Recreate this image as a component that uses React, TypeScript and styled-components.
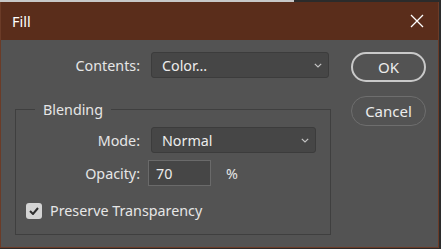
import React from "react";
import styled, { createGlobalStyle } from "styled-components";

const Global = createGlobalStyle`
  html, body { margin: 0; padding: 0; background: #2b2b2b; }
  body { font-family: "Noto Sans", "Open Sans", sans-serif; }
  * { box-sizing: border-box; }
`;

const Page = styled.div`
  width: 441px;
  height: 249px;
  display: flex;
  flex-direction: column;
  background: #2b2b2b;
  overflow: hidden;
`;

const TopStrip = styled.div`
  height: 2px;
  display: flex;
`;

const StripLight = styled.div`
  width: 294px;
  background: #c8c8c8;
`;

const Window = styled.div`
  width: 439px;
  height: 246px;
  display: flex;
  flex-direction: column;
  border: 1px solid #6b3b27;
  border-top: none;
`;

const TitleBar = styled.div`
  height: 38px;
  background: #5a2d1b;
  display: flex;
  align-items: center;
  justify-content: space-between;
  padding: 0 12px 0 11px;
  color: #ffffff;
  font-size: 14.5px;
`;

const CloseButton = styled.div`
  width: 14px;
  height: 14px;
  display: flex;
  align-items: center;
  justify-content: center;
  margin-right: 2px;
`;

const Body = styled.div`
  flex: 1;
  background: #535353;
  display: flex;
  padding: 12px 0 0 14px;
  color: #e6e6e6;
  font-size: 14.3px;
`;

const LeftColumn = styled.div`
  display: flex;
  flex-direction: column;
`;

const Row = styled.div<{ $mb?: number }>`
  display: flex;
  align-items: center;
  margin-bottom: ${(p) => p.$mb ?? 0}px;
`;

const Label = styled.div<{ $w: number; $gap: number }>`
  width: ${(p) => p.$w}px;
  margin-right: ${(p) => p.$gap}px;
  text-align: right;
  white-space: nowrap;
`;

const Select = styled.div<{ $w: number }>`
  width: ${(p) => p.$w}px;
  height: 26px;
  background: #464646;
  border: 1px solid #3c3c3c;
  border-radius: 3px;
  display: flex;
  align-items: center;
  justify-content: space-between;
  padding: 0 6px 0 10px;
  color: #ececec;
`;

const Input = styled.div`
  width: 63px;
  height: 26px;
  background: #464646;
  border: 1px solid #6a6a6a;
  display: flex;
  align-items: center;
  padding-left: 7px;
  color: #ececec;
`;

const Unit = styled.div`
  margin-left: 15px;
`;

const Group = styled.fieldset`
  margin: 22px 0 0 0;
  width: 316px;
  height: 135px;
  border: 1px solid #3f3f3f;
  padding: 0;
  display: flex;
  flex-direction: column;
`;

const Legend = styled.legend`
  margin-left: 19px;
  padding: 0 8px;
  color: #e6e6e6;
  line-height: 19px;
`;

const GroupContent = styled.div`
  display: flex;
  flex-direction: column;
  padding-top: 8px;
`;

const CheckRow = styled.div`
  display: flex;
  align-items: center;
  margin-left: 10px;
  margin-top: 15px;
`;

const Checkbox = styled.div`
  width: 16px;
  height: 16px;
  border-radius: 3px;
  background: #d4d4d4;
  display: flex;
  align-items: center;
  justify-content: center;
  margin-right: 8px;
`;

const RightColumn = styled.div`
  display: flex;
  flex-direction: column;
  margin-left: 20px;
  gap: 14px;
`;

const Button = styled.div<{ $primary?: boolean }>`
  width: 75px;
  height: 30px;
  border-radius: 15px;
  border: ${(p) => (p.$primary ? "2px solid #c9c9c9" : "1px solid #6e6e6e")};
  display: flex;
  align-items: center;
  justify-content: center;
  color: #ececec;
  font-size: 15px;
`;

const Chevron = () => (
  <svg width="8" height="5" viewBox="0 0 8 5">
    <path d="M0.8 0.8 L4 4 L7.2 0.8" fill="none" stroke="#c4c4c4" strokeWidth="1.2" />
  </svg>
);

export default function App() {
  return (
    <>
      <Global />
      <Page>
        <TopStrip>
          <StripLight />
        </TopStrip>
        <Window>
          <TitleBar>
            <span>Fill</span>
            <CloseButton>
              <svg width="14" height="14" viewBox="0 0 14 14">
                <path d="M1 1 L13 13 M13 1 L1 13" stroke="#ffffff" strokeWidth="1.3" />
              </svg>
            </CloseButton>
          </TitleBar>
          <Body>
            <LeftColumn>
              <Row>
                <Label $w={125} $gap={11}>Contents:</Label>
                <Select $w={178}>
                  <span>Color...</span>
                  <Chevron />
                </Select>
              </Row>
              <Group>
                <Legend>Blending</Legend>
                <GroupContent>
                  <Row $mb={7}>
                    <Label $w={124} $gap={11}>Mode:</Label>
                    <Select $w={165}>
                      <span>Normal</span>
                      <Chevron />
                    </Select>
                  </Row>
                  <Row>
                    <Label $w={124} $gap={8}>Opacity:</Label>
                    <Input>70</Input>
                    <Unit>%</Unit>
                  </Row>
                  <CheckRow>
                    <Checkbox>
                      <svg width="10" height="8" viewBox="0 0 10 8">
                        <path d="M1 4 L4 7 L9 1" fill="none" stroke="#2f2f2f" strokeWidth="2" />
                      </svg>
                    </Checkbox>
                    <span>Preserve Transparency</span>
                  </CheckRow>
                </GroupContent>
              </Group>
            </LeftColumn>
            <RightColumn>
              <Button $primary>OK</Button>
              <Button>Cancel</Button>
            </RightColumn>
          </Body>
        </Window>
      </Page>
    </>
  );
}
